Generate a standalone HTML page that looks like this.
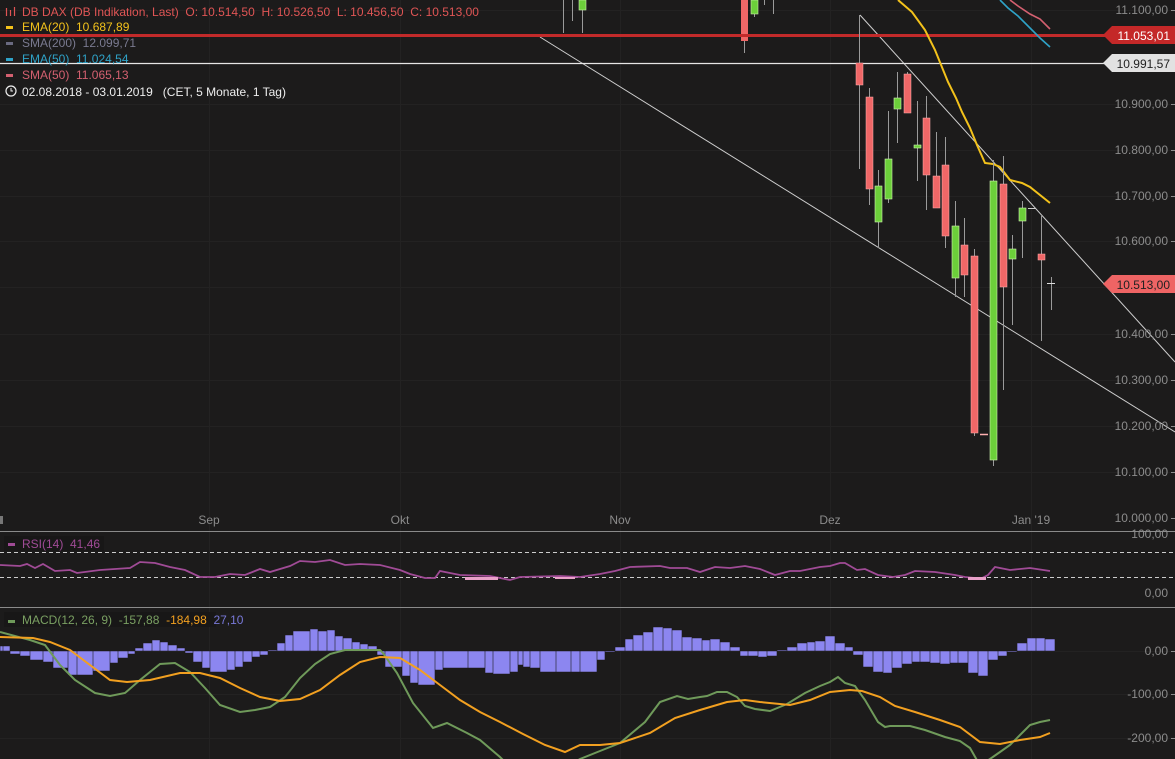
<!DOCTYPE html>
<html><head><meta charset="utf-8"><style>
html,body{margin:0;padding:0;background:#1c1b1b;width:1175px;height:759px;overflow:hidden}
svg{display:block;font-family:"Liberation Sans",sans-serif}
text{white-space:pre}
</style></head><body>
<svg width="1175" height="759" viewBox="0 0 1175 759" xmlns="http://www.w3.org/2000/svg" xml:space="preserve">
<rect width="1175" height="759" fill="#1c1b1b"/>
<g stroke="#232222" stroke-width="1">
<line x1="209.5" y1="0" x2="209.5" y2="759"/><line x1="400.5" y1="0" x2="400.5" y2="759"/><line x1="620.5" y1="0" x2="620.5" y2="759"/><line x1="830.5" y1="0" x2="830.5" y2="759"/><line x1="1031.5" y1="0" x2="1031.5" y2="759"/>
<line x1="0" y1="10.5" x2="1175" y2="10.5"/><line x1="0" y1="104.5" x2="1175" y2="104.5"/><line x1="0" y1="150.5" x2="1175" y2="150.5"/><line x1="0" y1="196.5" x2="1175" y2="196.5"/><line x1="0" y1="241.5" x2="1175" y2="241.5"/><line x1="0" y1="287.5" x2="1175" y2="287.5"/><line x1="0" y1="334.5" x2="1175" y2="334.5"/><line x1="0" y1="380.5" x2="1175" y2="380.5"/><line x1="0" y1="426.5" x2="1175" y2="426.5"/><line x1="0" y1="472.5" x2="1175" y2="472.5"/>
<line x1="0" y1="694.5" x2="1175" y2="694.5"/><line x1="0" y1="738.5" x2="1175" y2="738.5"/><line x1="0" y1="651.5" x2="1175" y2="651.5"/>
</g>
<line x1="0" y1="531.5" x2="1175" y2="531.5" stroke="#8a8a8a"/>
<line x1="0" y1="607.5" x2="1175" y2="607.5" stroke="#8a8a8a"/>
<line x1="540" y1="37" x2="1175" y2="432" stroke="#cfcfcf" stroke-width="1"/>
<line x1="860" y1="15" x2="1175" y2="362" stroke="#cfcfcf" stroke-width="1"/>
<line x1="0" y1="63.5" x2="1110" y2="63.5" stroke="#e6e6e6" stroke-width="1.3"/>
<g stroke="#9a9a9a" stroke-width="1">
<line x1="563.5" y1="0" x2="563.5" y2="33"/><line x1="572.5" y1="0" x2="572.5" y2="21"/><line x1="582.5" y1="0" x2="582.5" y2="33"/>
<line x1="744.5" y1="0" x2="744.5" y2="53"/><line x1="754.5" y1="0" x2="754.5" y2="17"/><line x1="764.5" y1="0" x2="764.5" y2="5"/><line x1="773.5" y1="0" x2="773.5" y2="14"/>
</g>
<rect x="579" y="0" width="7" height="10" fill="#6ccf3a" stroke="#c8f0a8" stroke-width="0.6"/>
<rect x="741" y="0" width="7" height="41" fill="#ef6767"/>
<rect x="751" y="0" width="7" height="14" fill="#6ccf3a" stroke="#c8f0a8" stroke-width="0.6"/>
<line x1="0" y1="35.5" x2="1110" y2="35.5" stroke="#c22a2a" stroke-width="3"/>
<polyline fill="none" stroke="#f3c21b" stroke-width="2" points="898,0 912,12 925,30 935,50 948,82 956,98 962,112 970,128 977,145 985,163 993,164 1000,167 1010,180 1022,183 1030,187 1040,195 1050,203"/>
<polyline fill="none" stroke="#2fa3c8" stroke-width="1.6" points="1000,0 1008,8 1018,16 1030,28 1040,38 1050,47"/>
<polyline fill="none" stroke="#d46070" stroke-width="1.6" points="1010,0 1018,6 1030,14 1040,19 1050,29"/>
<g stroke="#9a9a9a" stroke-width="1">
<line x1="859.5" y1="15" x2="859.5" y2="169"/><line x1="869.5" y1="88" x2="869.5" y2="205"/><line x1="878.5" y1="170" x2="878.5" y2="248"/><line x1="888.5" y1="111" x2="888.5" y2="203"/><line x1="897.5" y1="72" x2="897.5" y2="143"/><line x1="907.5" y1="72" x2="907.5" y2="113"/><line x1="917.5" y1="101" x2="917.5" y2="181"/><line x1="926.5" y1="96" x2="926.5" y2="210"/><line x1="936.5" y1="132" x2="936.5" y2="206"/><line x1="945.5" y1="137" x2="945.5" y2="248"/><line x1="955.5" y1="201" x2="955.5" y2="297"/><line x1="964.5" y1="218" x2="964.5" y2="297"/><line x1="974.5" y1="249" x2="974.5" y2="436"/><line x1="993.5" y1="160" x2="993.5" y2="466"/><line x1="1003.5" y1="156" x2="1003.5" y2="390"/><line x1="1012.5" y1="235" x2="1012.5" y2="325"/><line x1="1022.5" y1="201" x2="1022.5" y2="258"/><line x1="1041.5" y1="216" x2="1041.5" y2="341"/><line x1="1051.5" y1="277" x2="1051.5" y2="310"/>
</g>
<g fill="#ef6767" stroke="#ffb0b0" stroke-width="0.5">
<rect x="856" y="63" width="7" height="22"/><rect x="866" y="97" width="7" height="92"/><rect x="904" y="74" width="7" height="39"/><rect x="923" y="118" width="7" height="57"/><rect x="933" y="176" width="7" height="32"/><rect x="942" y="165" width="7" height="71"/><rect x="961" y="245" width="7" height="30"/><rect x="971" y="256" width="7" height="177"/><rect x="1000" y="184" width="7" height="103"/><rect x="1038" y="254" width="7" height="6"/>
</g>
<g fill="#6ccf3a" stroke="#d0f5b0" stroke-width="0.6">
<rect x="875" y="186" width="7" height="36"/><rect x="885" y="159" width="7" height="40"/><rect x="894" y="98" width="7" height="11"/><rect x="914" y="145" width="7" height="3"/><rect x="952" y="226" width="7" height="52"/><rect x="990" y="181" width="7" height="279"/><rect x="1009" y="249" width="7" height="10"/><rect x="1019" y="208" width="7" height="13"/>
</g>
<line x1="980" y1="434.5" x2="988" y2="434.5" stroke="#ffb0b0" stroke-width="1.5"/>
<line x1="1028" y1="208.5" x2="1036" y2="208.5" stroke="#cccccc" stroke-width="1"/>
<line x1="1047" y1="283.5" x2="1055" y2="283.5" stroke="#dddddd" stroke-width="1"/>
<g fill="#8c8c8c" font-size="12" text-anchor="end">
<text x="1168" y="14">11.100,00</text>
<text x="1168" y="108">10.900,00</text>
<text x="1168" y="154">10.800,00</text>
<text x="1168" y="200">10.700,00</text>
<text x="1168" y="245">10.600,00</text>
<text x="1168" y="338">10.400,00</text>
<text x="1168" y="384">10.300,00</text>
<text x="1168" y="430">10.200,00</text>
<text x="1168" y="476">10.100,00</text>
<text x="1168" y="522">10.000,00</text>
<text x="1168" y="538">100,00</text>
<text x="1168" y="597">0,00</text>
<text x="1168" y="655">0,00</text>
<text x="1168" y="698">-100,00</text>
<text x="1168" y="742">-200,00</text>
</g>
<g stroke="#8c8c8c"><line x1="1171" y1="10.5" x2="1175" y2="10.5"/><line x1="1171" y1="104.5" x2="1175" y2="104.5"/><line x1="1171" y1="150.5" x2="1175" y2="150.5"/><line x1="1171" y1="196.5" x2="1175" y2="196.5"/><line x1="1171" y1="241.5" x2="1175" y2="241.5"/><line x1="1171" y1="334.5" x2="1175" y2="334.5"/><line x1="1171" y1="380.5" x2="1175" y2="380.5"/><line x1="1171" y1="426.5" x2="1175" y2="426.5"/><line x1="1171" y1="472.5" x2="1175" y2="472.5"/><line x1="1171" y1="518.5" x2="1175" y2="518.5"/><line x1="1171" y1="651.5" x2="1175" y2="651.5"/><line x1="1171" y1="694.5" x2="1175" y2="694.5"/><line x1="1171" y1="738.5" x2="1175" y2="738.5"/></g>
<polygon points="1103,35 1112,26 1175,26 1175,44 1112,44" fill="#c42828"/>
<text x="1170" y="40" font-size="12" fill="#ffffff" text-anchor="end">11.053,01</text>
<polygon points="1103,63 1112,54 1175,54 1175,72 1112,72" fill="#e2e2e2"/>
<text x="1170" y="68" font-size="12" fill="#222" text-anchor="end">10.991,57</text>
<polygon points="1103,284 1112,275 1175,275 1175,293 1112,293" fill="#ee6464"/>
<text x="1170" y="289" font-size="12" fill="#222" text-anchor="end">10.513,00</text>
<g fill="#8c8c8c" font-size="12" text-anchor="middle">
<text x="209" y="524">Sep</text><text x="400" y="524">Okt</text><text x="620" y="524">Nov</text><text x="830" y="524">Dez</text><text x="1031" y="524">Jan '19</text>
</g>
<rect x="0" y="516" width="3" height="8" fill="#777"/>
<g font-size="12">
<text x="22" y="16" fill="#e05555">DB DAX (DB Indikation, Last)  O: 10.514,50  H: 10.526,50  L: 10.456,50  C: 10.513,00</text>
<g stroke="#e05555" stroke-width="1.2"><line x1="6.5" y1="8" x2="6.5" y2="16"/><line x1="10.5" y1="10" x2="10.5" y2="16"/><line x1="14.5" y1="7" x2="14.5" y2="16"/></g>
<rect x="6" y="26" width="7" height="3" fill="#f3c21b"/><text x="22" y="31" fill="#f3c21b">EMA(20)  10.687,89</text>
<rect x="6" y="42" width="7" height="3" fill="#6a6a80"/><text x="22" y="47" fill="#7a7a90">SMA(200)  12.099,71</text>
<rect x="6" y="58" width="7" height="3" fill="#2fa3c8"/><text x="22" y="63" fill="#2fa3c8">EMA(50)  11.024,54</text>
<rect x="6" y="74" width="7" height="3" fill="#d46070"/><text x="22" y="79" fill="#d46070">SMA(50)  11.065,13</text>
<circle cx="11" cy="91" r="5" fill="none" stroke="#eee" stroke-width="1.2"/><path d="M11 88 V91 H13" fill="none" stroke="#eee" stroke-width="1"/>
<text x="22" y="96" fill="#eeeeee">02.08.2018 - 03.01.2019   (CET, 5 Monate, 1 Tag)</text>
</g>
<line x1="0" y1="552.5" x2="1175" y2="552.5" stroke="#cccccc" stroke-dasharray="4,3"/>
<line x1="0" y1="577.5" x2="1175" y2="577.5" stroke="#cccccc" stroke-dasharray="4,3"/>
<polyline fill="none" stroke="#a04b96" stroke-width="1.8" points="0,565 20,566 27,564 35,568 43,564 55,571 70,570 77,573 100,570 130,568 140,562 155,563 170,567 185,570 200,577 215,577 230,574 245,575 260,569 270,572 290,566 300,561 315,562 330,560 345,565 360,564 380,565 400,570 410,574 425,578 435,578 440,571 460,575 490,576 510,580 520,577 560,576 580,577 600,574 615,571 630,567 660,566 670,568 687,568 700,572 715,567 730,568 745,566 760,569 775,575 790,571 800,571 820,567 830,566 840,563 845,563 857,570 865,569 878,575 893,577 905,575 915,571 935,572 955,575 965,577 975,578 980,579 988,575 995,567 1010,570 1030,568 1050,571"/>
<rect x="465" y="577" width="33" height="3" fill="#e8a0c8"/><rect x="555" y="577" width="20" height="2" fill="#e8a0c8"/><rect x="968" y="577" width="18" height="3" fill="#e8a0c8"/>
<rect x="4" y="536" width="100" height="15" fill="#181717"/>
<rect x="8" y="543" width="7" height="3" fill="#a04b96"/>
<text x="22" y="548" font-size="12" fill="#a04b96">RSI(14)  41,46</text>
<path fill="#8c86f0" stroke="#1c1b1b" stroke-width="0.6" d="
M0,651H3V646H0Z M3,651H10V646H3Z
M10,651H20V654H10Z M20,651H30V656H20Z M30,651H43V660H30Z M43,651H53V662H43Z M53,651H68V668H53Z M68,651H77V675H68Z M77,651H93V675H77Z M93,651H110V671H93Z M110,651H118V663H110Z M118,651H128V658H118Z M128,651H135V654H128Z
M135,651H143V648H135Z M143,651H152V643H143Z M152,651H160V640H152Z M160,651H168V642H160Z M168,651H177V645H168Z M177,651H185V648H177Z
M185,651H193V653H185Z M193,651H202V662H193Z M202,651H210V668H202Z M210,651H227V672H210Z M227,651H235V670H227Z M235,651H243V667H235Z M243,651H252V662H243Z M252,651H260V657H252Z M260,651H268V655H260Z
M268,651H277V650H268Z M277,651H285V643H277Z M285,651H293V635H285Z M293,651H310V631H293Z M310,651H318V629H310Z M318,651H327V631H318Z M327,651H335V630H327Z M335,651H343V636H335Z M343,651H352V638H343Z M352,651H360V642H352Z M360,651H368V644H360Z M368,651H377V646H368Z
M377,651H385V655H377Z M385,651H402V667H385Z M402,651H410V676H402Z M410,651H418V683H410Z M418,651H435V685H418Z M435,651H443V670H435Z M443,651H468V668H443Z M468,651H485V668H468Z M485,651H493V673H485Z M493,651H510V674H493Z M510,651H518V672H510Z M518,651H523V665H518Z
M523,651H530V667H523Z M530,651H540V668H530Z M540,651H556V672H540Z M556,651H571V672H556Z M571,651H580V672H571Z M580,651H597V672H580Z M597,651H605V660H597Z M605,651H615V652H605Z
M615,651H625V647H615Z M625,651H633V639H625Z M633,651H643V635H633Z M643,651H653V632H643Z M653,651H663V627H653Z M663,651H672V628H663Z M672,651H682V630H672Z M682,651H692V637H682Z M692,651H702V638H692Z M702,651H710V640H702Z M710,651H720V639H710Z M720,651H730V642H720Z M730,651H740V647H730Z
M740,651H748V656H740Z M748,651H758V656H748Z M758,651H767V657H758Z M767,651H777V656H767Z
M777,651H787V650H777Z M787,651H797V647H787Z M797,651H807V643H797Z M807,651H815V642H807Z M815,651H825V641H815Z M825,651H835V636H825Z M835,651H845V643H835Z M845,651H853V647H845Z
M853,651H863V655H853Z M863,651H873V667H863Z M873,651H883V672H873Z M883,651H892V673H883Z M892,651H902V668H892Z M902,651H912V664H902Z M912,651H920V662H912Z M920,651H930V662H920Z M930,651H940V663H930Z M940,651H950V664H940Z M950,651H958V663H950Z M958,651H968V663H958Z M968,651H978V673H968Z M978,651H988V676H978Z M988,651H998V660H988Z M998,651H1007V656H998Z M1007,651H1017V652H1007Z
M1017,651H1027V643H1017Z M1027,651H1036V638H1027Z M1036,651H1045V638H1036Z M1045,651H1055V639H1045Z"/>
<polyline fill="none" stroke="#6f9a5a" stroke-width="2" points="0,632 30,640 45,645 60,665 75,680 95,693 110,696 125,693 140,680 160,664 175,663 190,672 205,688 220,705 240,712 255,710 270,707 285,697 300,678 315,664 330,654 345,650 380,650 383,653 397,673 413,703 433,728 447,723 467,733 480,740 500,757 505,762 575,762 580,759 600,751 620,743 645,722 660,702 677,696 688,699 700,697 707,696 717,692 727,692 737,697 745,706 755,709 770,711 787,704 805,693 820,686 830,682 838,677 845,683 855,686 865,700 878,722 885,727 890,726 910,726 925,730 945,737 960,741 970,748 978,762 985,762 990,759 1000,752 1010,745 1020,735 1030,725 1040,722 1050,720"/>
<polyline fill="none" stroke="#f2a020" stroke-width="2" points="0,637 33,638 50,642 70,650 90,665 110,680 127,682 150,680 180,673 200,673 220,678 240,688 260,697 280,701 300,699 320,690 340,675 360,662 380,657 400,658 420,670 440,685 460,700 480,712 500,722 523,734 545,745 565,752 580,745 600,745 620,743 650,733 675,718 700,710 727,702 745,700 760,702 790,705 810,700 830,692 850,690 862,691 880,697 895,706 915,712 940,720 960,727 980,742 1000,744 1020,740 1040,737 1050,733"/>
<rect x="4" y="612" width="212" height="15" fill="#181717"/>
<rect x="8" y="620" width="7" height="3" fill="#6f9a5a"/>
<text x="22" y="624" font-size="12"><tspan fill="#7aa062">MACD(12, 26, 9)  -157,88  </tspan><tspan fill="#f2a020">-184,98  </tspan><tspan fill="#7878d8">27,10</tspan></text>
</svg>
</body></html>
